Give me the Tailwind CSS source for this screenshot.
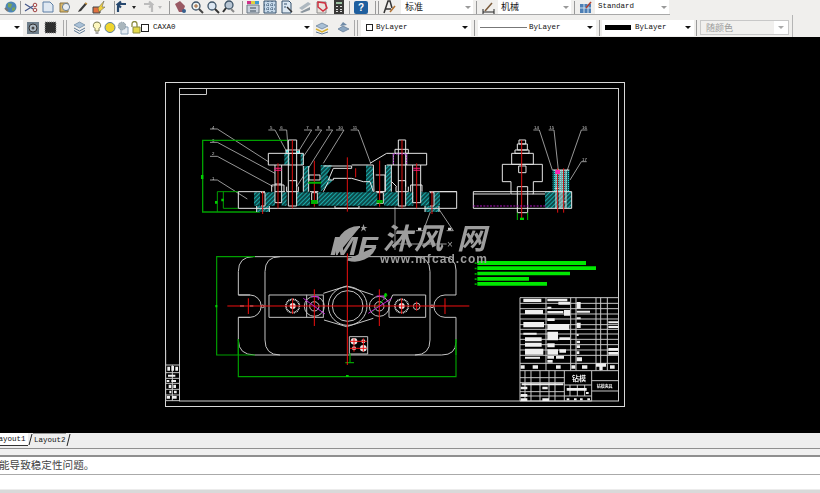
<!DOCTYPE html>
<html lang="en">
<head>
    <meta charset="UTF-8">
    <title>CAXA drawing</title>
    <script src="https://cdn.jsdelivr.net/npm/@tailwindcss/browser@4"></script>
</head>
<body class="w-[820px] h-[493px] overflow-hidden bg-[#f1f0ee] font-['Liberation_Mono',monospace] text-[7.5px] text-[#111]">

    <!-- toolbars -->
    <div class="h-[37px] flex flex-col bg-[#f0efed]">
        <div class="h-[15px] flex items-center w-[670px] border-b border-[#a9a9a9] shrink-0">
            <svg class="ml-[3px] w-[15px] h-[14px]" viewBox="0 0 15 14"><circle cx="8" cy="7" r="5.5" fill="#4d86b5"/><path d="M5 3l4 1-1 4-3-1zM9 8l3-1 0 3-3 1z" fill="#79a35b"/><path d="M2 8l3 3" stroke="#777" stroke-width="2"/></svg>
            <div class="w-[1px] h-[13px] bg-[#999] ml-[2px]"></div>
            <svg class="ml-[3px] w-[14px] h-[13px]" viewBox="0 0 14 13"><path d="M1 3l8 5M1 10l8-5" stroke="#44578a" stroke-width="1.2"/><circle cx="11" cy="4" r="1.8" fill="none" stroke="#a04040"/><circle cx="11" cy="9" r="1.8" fill="none" stroke="#a04040"/></svg>
            <svg class="ml-[3px] w-[14px] h-[14px]" viewBox="0 0 14 14"><path d="M2 2h7l3 3v7H2z" fill="#dfe8f2" stroke="#5c7fa6"/></svg>
            <svg class="ml-[3px] w-[14px] h-[14px]" viewBox="0 0 14 14"><path d="M2 3h8v9H2z" fill="#d9b768" stroke="#8a7340"/><circle cx="8" cy="7" r="3.6" fill="#e9eef3" stroke="#6a7f96"/></svg>
            <svg class="ml-[4px] w-[13px] h-[13px]" viewBox="0 0 13 13"><path d="M2 11l3-1 6-7-2-1-6 7z" fill="#3a3a3a"/><path d="M9 2l2 1" stroke="#c09040" stroke-width="1.5"/></svg>
            <svg class="ml-[3px] w-[14px] h-[14px]" viewBox="0 0 14 14"><path d="M1 7h7v6H1z" fill="#e07040" stroke="#444"/><path d="M6 8l6-7-2 6h3l-6 5z" fill="#f0d040" stroke="#555" stroke-width=".5"/></svg>
            <div class="w-[1px] h-[13px] bg-[#999] ml-[8px]"></div>
            <svg class="w-[14px] h-[14px]" viewBox="0 0 14 14"><path d="M3 11V6q0-3 3-3h5M6 0.500L2.500 3.500 6 6.500" transform="translate(0 1)" fill="none" stroke="#27486e" stroke-width="2.200"/></svg>
            <span class="ml-[3px] border-x-[2px] border-t-[3px] border-x-transparent border-t-[#222]"></span>
            <svg class="ml-[5px] w-[14px] h-[14px]" viewBox="0 0 14 14"><path d="M11 11V6q0-3-3-3H3M8 0.500l3.500 3L8 6.500" transform="translate(0 1)" fill="none" stroke="#bcbcbc" stroke-width="2.200"/></svg>
            <span class="ml-[3px] border-x-[2px] border-t-[3px] border-x-transparent border-t-[#bbb]"></span>
            <div class="w-[1px] h-[13px] bg-[#999] ml-[7px]"></div>
            <svg class="ml-[3px] w-[14px] h-[14px]" viewBox="0 0 14 14"><path d="M2 4l5-3 5 5-2 6H6z" fill="#9a5a64"/><circle cx="11" cy="11" r="2" fill="#36608e"/></svg>
            <svg class="ml-[3px] w-[14px] h-[14px]" viewBox="0 0 14 14"><circle cx="6" cy="6" r="4" fill="#eef2ee" stroke="#40566a" stroke-width="1.300"/><path d="M9 9l4 4" stroke="#444" stroke-width="2"/><path d="M4 6h4M6 4v4" stroke="#a06030"/></svg>
            <svg class="ml-[2px] w-[14px] h-[14px]" viewBox="0 0 14 14"><circle cx="6" cy="6" r="4" fill="#dce7f2" stroke="#40566a" stroke-width="1.300"/><path d="M9 9l4 4" stroke="#333" stroke-width="2"/></svg>
            <svg class="ml-[2px] w-[14px] h-[14px]" viewBox="0 0 14 14"><circle cx="7" cy="5" r="4" fill="#b8c6d4" stroke="#40566a" stroke-width="1.300"/><path d="M4 8l-3 4" stroke="#333" stroke-width="2"/><path d="M9 9l3 3" stroke="#888" stroke-width="2"/></svg>
            <div class="w-[1px] h-[13px] bg-[#999] ml-[6px]"></div>
            <svg class="ml-[3px] w-[14px] h-[14px]" viewBox="0 0 14 14"><path d="M1 1h4v3H1z" fill="#d0308a"/><path d="M5 1h4v3H5z" fill="#e0d040"/><path d="M9 1h4v3H9z" fill="#3c9ad0"/><path d="M1 5h12v8H1z" fill="#c9d2dc" stroke="#6a7682"/><path d="M4 8h6M4 11h6" stroke="#3a4a5a"/></svg>
            <svg class="ml-[3px] w-[14px] h-[14px]" viewBox="0 0 14 14"><path d="M1 1h12v12H1z" fill="#c6d9ea" stroke="#34506c"/><path d="M5 1v12M9 1v12M1 5h12M1 9h12" stroke="#34506c" stroke-dasharray="1 1"/></svg>
            <svg class="ml-[3px] w-[14px] h-[14px]" viewBox="0 0 14 14"><path d="M2 1h7l2 2v10H2z" fill="#dce8f2" stroke="#34506c"/><path d="M7 7l5 5" stroke="#333" stroke-width="1.500"/><path d="M4 4h3M4 7h2" stroke="#34506c"/></svg>
            <svg class="ml-[4px] w-[14px] h-[14px]" viewBox="0 0 14 14"><path d="M1 8l9-6 3 2-9 6z" fill="#aeb8c0"/><path d="M2 12l10-5v3l-8 3z" fill="#8a959e"/></svg>
            <svg class="ml-[3px] w-[14px] h-[14px]" viewBox="0 0 14 14"><path d="M2 2h9v11H2z" fill="#e9e4de" stroke="#8c8c8c"/><path d="M3 2l7 1 2 5-4 3-5-4z" fill="none" stroke="#d03040" stroke-width="1.500"/></svg>
            <svg class="ml-[3px] w-[14px] h-[14px]" viewBox="0 0 14 14"><path d="M2 0h10v14H2z" fill="#3a3a38"/><path d="M4 2h6v2H4z" fill="#9ac0a0"/><path d="M4 6h2v1H4zM8 6h2v1H8zM4 9h2v1H4zM8 9h2v1H8zM4 11h2v1H4zM8 11h2v1H8z" fill="#ddd"/></svg>
            <div class="w-[1px] h-[13px] bg-[#999] ml-[3px]"></div>
            <div class="ml-[4px] w-[14px] h-[13px] bg-[#1f5f9e] rounded-[2px] text-white font-bold text-[10px] leading-[13px] text-center font-['Liberation_Sans',sans-serif]">?</div>
            <div class="w-[1px] h-[13px] bg-[#999] ml-[7px]"></div>
            <div class="w-[1px] h-[13px] bg-[#999] ml-[2px]"></div>
            <svg class="ml-[4px] w-[13px] h-[14px]" viewBox="0 0 13 14"><path d="M1 13L5 1h2l2 7M3 9h5" fill="none" stroke="#333" stroke-width="1.500"/><path d="M7 12l5-6" stroke="#b07030" stroke-width="1.500"/></svg>
            <div class="ml-[5px] w-[72px] h-[14px] bg-white flex items-center justify-between pl-[4px] pr-[2px] font-['Noto_Sans_CJK_SC',sans-serif] text-[9px]">标准<span class="border-x-[3px] border-t-[3px] border-x-transparent border-t-[#999]"></span></div>
            <div class="w-[1px] h-[13px] bg-[#999] ml-[3px]"></div>
            <svg class="ml-[5px] w-[13px] h-[13px]" viewBox="0 0 13 13"><path d="M1 11h11M1 8v5M12 8v5" stroke="#222"/><path d="M3 10l7-8" stroke="#7a5a3a" stroke-width="1.500"/></svg>
            <div class="ml-[3px] w-[73px] h-[14px] bg-white flex items-center justify-between pl-[3px] pr-[2px] font-['Noto_Sans_CJK_SC',sans-serif] text-[9px]">机械<span class="border-x-[3px] border-t-[3px] border-x-transparent border-t-[#999]"></span></div>
            <div class="w-[1px] h-[13px] bg-[#999] ml-[3px]"></div>
            <svg class="ml-[4px] w-[13px] h-[13px]" viewBox="0 0 13 13"><path d="M1 3h11v9H1z" fill="#4d7fb5"/><path d="M1 7h11M5 3v9M9 3v9" stroke="#cfe0ee"/><path d="M7 7l5-6" stroke="#b04030" stroke-width="1.500"/></svg>
            <div class="ml-[3px] w-[74px] h-[14px] bg-white flex items-center justify-between pl-[3px] pr-[2px]">Standard<span class="border-x-[3px] border-t-[3px] border-x-transparent border-t-[#999]"></span></div>
        </div>

        <div class="h-[22px] pt-[3px] w-[793px] flex items-center border-r border-[#b5b5b5] shrink-0">
            <div class="w-[23px] h-[16px] bg-white flex items-center justify-end pr-[3px]"><span class="border-x-[3px] border-t-[3px] border-x-transparent border-t-[#111]"></span></div>
            <svg class="ml-[3px] w-[14px] h-[14px]" viewBox="0 0 14 14"><path d="M1 1h12v12H1z" fill="#6f7f8c"/><circle cx="7" cy="7" r="4" fill="#aebac4" stroke="#333"/><circle cx="7" cy="7" r="1.500" fill="#444"/></svg>
            <svg class="ml-[4px] w-[13px] h-[13px]" viewBox="0 0 13 13"><path d="M1 1h11v11H1z" fill="#2e2e2e" stroke="#999" stroke-dasharray="1 1"/></svg>
            <div class="w-[1px] h-[16px] bg-[#aaa] ml-[6px]"></div>
            <div class="w-[1px] h-[16px] bg-[#aaa] ml-[2px]"></div>
            <svg class="ml-[6px] w-[13px] h-[13px]" viewBox="0 0 13 13"><path d="M1 4l5.500-3L12 4 6.500 7z" fill="#a9c0d6" stroke="#5d7894" stroke-width=".6"/><path d="M1 7l5.500 3L12 7M1 9.500l5.500 3 5.500-3" fill="none" stroke="#5d7894"/></svg>
            <div class="ml-[4px] w-[223px] h-[16px] bg-white flex items-center">
                <svg class="ml-[2px] w-[10px] h-[14px]" viewBox="0 0 10 14"><path d="M5 1a3.500 3.500 0 0 1 2 6.500V10H3V7.500A3.500 3.500 0 0 1 5 1z" fill="#fdf7c0" stroke="#7a7a50"/><path d="M3.500 12h3" stroke="#555"/></svg>
                <svg class="ml-[2px] w-[12px] h-[13px]" viewBox="0 0 12 13"><circle cx="6" cy="6.500" r="5" fill="#efd52e" stroke="#5a7e9e"/></svg>
                <svg class="w-[13px] h-[14px]" viewBox="0 0 13 14"><path d="M5 6h7v7H5z" fill="#e6edf3" stroke="#8aa2b8"/><circle cx="6" cy="5" r="3.800" fill="#a9b6bd" stroke="#8b9ba8" stroke-dasharray="1.500 .8"/></svg>
                <svg class="ml-[1px] w-[11px] h-[13px]" viewBox="0 0 11 13"><path d="M2 6V3a2.500 2.500 0 0 1 5 0v3" fill="none" stroke="#8a8a40" stroke-width="1.300"/><path d="M3 6h7v6H3z" fill="#e3d94a" stroke="#8a8a40"/></svg>
                <div class="w-[8px] h-[8px] bg-white border border-[#222]"></div>
                <span class="ml-[4px] pt-[1px]">CAXA0</span>
                <span class="ml-auto mr-[3px] border-x-[3px] border-t-[3px] border-x-transparent border-t-[#111]"></span>
            </div>
            <svg class="ml-[2px] w-[14px] h-[14px]" viewBox="0 0 14 14"><path d="M1 5l6-3 6 3-6 3z" fill="#a9c0d6" stroke="#4d6a88" stroke-width=".6"/><path d="M1 8l6 3 6-3" fill="none" stroke="#d8b02e" stroke-width="1.500"/><path d="M1 11l6 2 6-2" fill="none" stroke="#5d7894"/></svg>
            <svg class="ml-[8px] w-[13px] h-[13px]" viewBox="0 0 13 13"><path d="M1 8l5-3 6 3-6 3z" fill="#8ca6c0" stroke="#4d6a88" stroke-width=".6"/><path d="M3 5l3-4 4 3" fill="#6f8aa6"/></svg>
            <div class="w-[1px] h-[16px] bg-[#aaa] ml-[4px]"></div>
            <div class="w-[1px] h-[16px] bg-[#aaa] ml-[2px]"></div>
            <div class="ml-[3px] w-[110px] h-[16px] bg-white flex items-center pl-[5px]">
                <div class="w-[7px] h-[7px] bg-white border border-[#222]"></div>
                <span class="ml-[3px] pt-[1px]">ByLayer</span>
                <span class="ml-auto mr-[3px] border-x-[3px] border-t-[3px] border-x-transparent border-t-[#111]"></span>
            </div>
            <div class="w-[1px] h-[16px] bg-[#999] ml-[3px]"></div>
            <div class="ml-[3px] w-[118px] h-[16px] bg-white flex items-center pl-[2px]">
                <div class="w-[47px] h-[1px] bg-[#777]"></div>
                <span class="ml-[2px] pt-[1px]">ByLayer</span>
                <span class="ml-auto mr-[3px] border-x-[3px] border-t-[3px] border-x-transparent border-t-[#111]"></span>
            </div>
            <div class="w-[1px] h-[16px] bg-[#999] ml-[3px]"></div>
            <div class="ml-[2px] w-[92px] h-[16px] bg-white flex items-center pl-[3px]">
                <div class="w-[26px] h-[5px] bg-black"></div>
                <span class="ml-[4px] pt-[1px]">ByLayer</span>
                <span class="ml-auto mr-[3px] border-x-[3px] border-t-[3px] border-x-transparent border-t-[#111]"></span>
            </div>
            <div class="w-[1px] h-[16px] bg-[#999] ml-[2px]"></div>
            <div class="ml-[3px] w-[89px] h-[15px] bg-[#f1f0ee] border border-[#c8c8c8] flex items-center pl-[5px] font-['Noto_Sans_CJK_SC',sans-serif] text-[9px] text-[#9b9b9b]">
                随颜色
                <div class="ml-auto w-[14px] h-full bg-white flex items-center justify-center"><span class="border-x-[3px] border-t-[3px] border-x-transparent border-t-[#aaa]"></span></div>
            </div>
        </div>
    </div>

    <!-- drawing area -->
    <div class="relative h-[396px] bg-black overflow-hidden">
        <svg class="block w-[820px] h-[396px] blur-[0.3px]" viewBox="0 37 820 396" fill="none">
            <defs>
                <pattern id="hatch" width="9" height="9" patternUnits="userSpaceOnUse" patternTransform="rotate(45)">
                    <rect width="9" height="9" fill="#0c4a4a"/>
                    <path d="M0 0V9" stroke="#1fd8d8" stroke-width="4"/>
                </pattern>
                <pattern id="dots" width="6" height="6" patternUnits="userSpaceOnUse">
                    <rect width="6" height="6" fill="#0c5a5a"/>
                    <rect width="3" height="3" fill="#22e0e0"/>
                </pattern>
            </defs>

            <!-- sheet frame -->
            <rect x="165.500" y="82.500" width="459" height="324" stroke="#d8d8d8"/>
            <rect x="179.500" y="88.500" width="439" height="312.500" stroke="#d0d0d0"/>
            <path d="M179.500 94.500H206.500V88.500" stroke="#c8c8c8"/>

            <!-- front view, coordinates taken from a 3x crop -->
            <g transform="translate(160 80) scale(.33333)" stroke-width="3">
                <g stroke="#b5b5b5" stroke-width="2.500">
                    <path d="M150 147H172L325 245M150 187H172L345 280M150 229H172L340 320M150 300H172L262 357"/>
                    <path d="M325 150H345L380 215M357 150H380L385 215M432 150H455L415 215M465 150H485L430 230M498 150H518L410 320M528 150H552L490 250M572 150H595L632 250"/>
                    <path d="M768 452H790L815 385M860 452H880L835 385M705 380V510M705 492H860"/>
                </g>
                <g fill="#d0d0d0" font-size="13" font-family="Liberation Sans" stroke="none">
                    <text x="156" y="146">4</text><text x="156" y="186">3</text><text x="156" y="226">2</text><text x="156" y="299">1</text>
                    <text x="330" y="148">5</text><text x="361" y="148">6</text><text x="439" y="148">7</text><text x="471" y="148">8</text><text x="503" y="148">9</text><text x="534" y="148">10</text><text x="578" y="148">11</text>
                </g>
                <path d="M774 443h10v8h-10zM864 443h10v8h-10z" fill="#d0d0d0"/>
                <g stroke="#00a000" stroke-width="4">
                    <path d="M382 181H128V396H300"/>
                    <path d="M235 335H172V396" stroke-width="3"/>
                    <path d="M235 385H190V335" stroke-width="3"/>
                </g>
                <path d="M123 285h7v12h-7zM165 363h7v8h-7zM184 356h7v8h-7z" fill="#00d000"/>

                <!-- hatched sections -->
                <g fill="url(#hatch)">
                    <path d="M282 337h18v40h-18zM315 337h30v40h-30zM365 337h15v40h-15zM408 337h42v40h-42zM475 337h177v40H475zM672 337h43v40h-43zM738 337h22v40h-22zM782 337h26v40h-26zM822 337h18v40h-18z"/>
                    <path d="M430 258h16v77h-16zM482 255h35l-16 30 16 18-35 32zM618 255l22 6v74h-22zM676 255h18v80h-18z"/>
                    <path d="M373 220h16v35h-16zM422 220h8v35h-8zM290 378h38v18h-38zM795 378h42v18h-42z"/>
                </g>
                <path d="M408 213h12v8h-12zM378 210h8v8h-8z" fill="#22e0e0"/>

                <g stroke="#e6e6e6">
                    <path d="M235 335H315M235 335V385H890V335H840M235 385M375 335H345M450 335H475M652 335H672M808 335H890"/>
                    <path d="M325 220H430V255H325ZM630 250L680 220H800V255H680M700 255V220M740 255V220"/>
                    <path d="M345 255V368H365V255M345 312H365M335 335V315H372V335"/>
                    <path d="M758 255V368H782V255M752 335V315H786V335"/>
                    <path d="M385 180V378H410V180ZM378 210H418V220H378ZM380 320V335H415V320M388 302H410V320"/>
                    <path d="M715 180V378H737V180ZM705 208H745V220H705ZM708 320V335H745V320M715 302H737V320"/>
                    <path d="M430 258V335M446 258V335M490 258H575V265H520L505 300H520V295H575L610 305H630L640 335M490 335L505 305M575 255H640L642 335"/>
                    <path d="M676 255V335M694 255V335M695 305L710 320"/>
                    <path d="M447 285H480V300H447ZM647 285H675V335H647"/>
                    <path d="M455 338H472V370H455ZM650 338H670V370H650M303 338H315V378H303M810 338H822V378H810"/>
                    <path d="M525 378V385H597V378M528 385H595M290 378V396M328 378V396M795 378V396M837 378V396"/>
                </g>
                <g stroke="#e01010">
                    <path d="M562 232V395M587 265V292M397 180V385M726 180V385M354 250V385M770 250V385M463 242V380M659 242V380M308 335V402M816 335V402"/>
                </g>
                <path d="M343 263h22v3h-22zM343 269h22v3h-22zM760 263h20v3h-20zM760 269h20v3h-20z" fill="#ff2080"/>
                <path d="M700 222v30M740 222v30M700 222h40" stroke="#a020c0" stroke-dasharray="5 3"/>
                <path d="M445 305h38v6h-38zM453 360h20v12h-20zM650 360h18v10h-18z" fill="#00b000"/>
            </g>

            <!-- side view -->
            <g transform="translate(460 120) scale(.33333)" stroke-width="3">
                <g stroke="#b5b5b5" stroke-width="2.500">
                    <path d="M220 30H238L277 150M266 30H282L295 150M382 30H364L322 150M380 125H364L330 180"/>
                </g>
                <g fill="#d0d0d0" font-size="13" font-family="Liberation Sans"><text x="222" y="27">14</text><text x="268" y="27">15</text><text x="366" y="27">16</text><text x="366" y="122">17</text></g>
                <path d="M278 150h50v65h-50z" fill="url(#dots)"/>
                <path d="M255 215h80v50h-80z" fill="url(#hatch)"/>
                <g stroke="#e6e6e6">
                    <path d="M40 215V265H335V215H40M40 222H152M218 222H255"/>
                    <path d="M127 133H247V185H220V222H153V185H127Z"/>
                    <path d="M155 100H220V133H155ZM165 90H207V100H165ZM172 72H202V90H172ZM177 60H197V72H177Z"/>
                    <path d="M172 200H203V278H172ZM176 138H198V158H176Z"/>
                    <path d="M288 150V265M300 150V265M306 150V265M318 150V265M278 150H328M286 205H298M308 245H318"/>
                </g>
                <path d="M185 60V295M293 145V278M311 145V278" stroke="#e01010"/>
                <path d="M40 258H260" stroke="#b010c0" stroke-dasharray="6 4"/>
                <path d="M286 150h14v12h-14z" fill="#ff20b0"/>
                <path d="M172 278V300M203 278V300" stroke="#00c000"/>
                <path d="M180 293h12v7h-12z" fill="#00d000"/>
            </g>

            <!-- top view -->
            <g transform="translate(200 240) scale(.33333)" stroke-width="3">
                <g stroke="#c4c4c4">
                    <path d="M165 50H725Q768 50 768 90V165H735A33 33 0 0 0 735 232H768V305Q768 345 725 345H165Q115 345 115 300V232H150A33 33 0 0 0 150 165H115V95Q115 50 160 50"/>
                    <path d="M240 50Q195 50 195 95V300Q195 345 240 345M645 50Q690 50 690 95V300Q690 345 645 345"/>
                    <path d="M115 165H150M115 232H150M120 198H132M150 198H160"/>
                    <path d="M320 165H207V232H320M567 232V190L578 165H677V232H567"/>
                    <path d="M370 160L440 138L520 165M372 240L440 260L520 235"/>
                    <rect x="320" y="165" width="50" height="67"/>
                    <circle cx="443" cy="198" r="46"/><circle cx="443" cy="198" r="58"/>
                    <circle cx="343" cy="199" r="14"/><circle cx="343" cy="199" r="30"/>
                    <circle cx="538" cy="199" r="14"/><circle cx="538" cy="199" r="30"/>
                    <circle cx="650" cy="199" r="10"/><circle cx="188" cy="199" r="4"/><circle cx="696" cy="199" r="4"/>
                    <path d="M448 290H503V342H448Z"/>
                </g>
                <g fill="#e8e8e8">
                    <circle cx="278" cy="198" r="20" fill="none" stroke="#f0f0f0" stroke-width="5" stroke-dasharray="3 2"/>
                    <circle cx="605" cy="198" r="20" fill="none" stroke="#f0f0f0" stroke-width="5" stroke-dasharray="3 2"/>
                    <circle cx="278" cy="198" r="9"/><circle cx="605" cy="198" r="9"/>
                    <circle cx="462" cy="304" r="10"/><circle cx="490" cy="325" r="10"/><circle cx="490" cy="304" r="6"/><circle cx="462" cy="325" r="6"/>
                </g>
                <g stroke="#00a000" stroke-width="3.500">
                    <path d="M165 50H50V345H165M115 298V410H768V298"/>
                    <path d="M115 298V345M768 298V345"/>
                    <path d="M450 340V370M436 368H462"/>
                </g>
                <path d="M46 195h6v7h-6zM438 405h8v6h-8zM555 158l7 4-6 12-6-4z" fill="#00d000"/>
                <path d="M518 215L562 165" stroke="#00b000"/>
                <g stroke="#f01010">
                    <path d="M82 198H808M442 40V375M145 175V222M278 175V222M343 148V258M538 148V258M605 175V222M650 185V212M735 175V222"/>
                    <path d="M450 304H500M450 325H500M462 295V335M490 295V335"/>
                </g>
                <g stroke="#c020d0"><path d="M310 175L375 222M505 220L575 175M335 170H355V180M530 168H552V180"/></g>
            </g>

            <!-- green text block and title block -->
            <g transform="translate(470 250) scale(.33333)">
                <path d="M22 33H348V45H22ZM22 49H378V60H22ZM22 65H300V76H22ZM22 81H177V92H22ZM22 96H231V107H22Z" fill="#00e800"/>
                <path d="M14 37h6v5h-6zM14 53h6v5h-6zM14 69h6v5h-6zM14 85h6v5h-6zM14 100h6v5h-6z" fill="#00a000"/>

                <g stroke="#c8c8c8" stroke-width="3">
                    <path d="M150 143H445M150 160H445M150 176H445M150 192H445M150 207H445M150 224H445M150 238H445M150 252H445M150 268H445M150 284H445M150 300H445M150 316H445M150 340H445M150 362H445M150 453H365M283 405H365M283 438H365M365 392H445M365 423H445"/>
                    <path d="M150 143V453M228 143V362M302 143V362M318 143V362M378 143V362M392 143V362M412 143V362M283 362V453M365 362V453M165 362V453M183 362V453M210 362V453M237 362V453M255 362V453M300 405V438M322 405V438M344 405V438"/>
                    <path d="M150 383H283M150 398H283M150 425H283M150 438H283"/>
                </g>
                <path d="M160 146h54v10h-54zM232 146h60v8h-60zM265 155h35v9h-35zM165 180h54v12h-54zM232 170h12v6h-12zM232 183h48v7h-48zM282 180h18v17h-18zM320 156h12v20h-12zM320 182h40v6h-40zM160 216h62v16h-62zM232 205h22v8h-22zM232 222h66v18h-66zM320 202h12v6h-12zM320 218h12v16h-12zM415 214h30v6h-30zM415 228h30v6h-30zM160 248h40v6h-40zM165 262h50v12h-50zM232 245h32v26h-32zM268 262h32v8h-32zM320 252h6v6h-6zM165 278h50v12h-50zM232 280h22v12h-22zM165 296h55v18h-55zM232 298h32v16h-32zM268 298h20v10h-20zM320 272h10v8h-10zM320 286h10v8h-10zM320 304h8v8h-8zM415 294h30v8h-30zM415 306h30v8h-30zM165 320h45v6h-45zM232 318h20v8h-20zM258 318h24v8h-24zM320 322h16v12h-16zM232 330h16v8h-16zM152 346h12v10h-12zM188 346h16v10h-16zM258 346h14v10h-14zM304 346h12v10h-12zM336 346h16v10h-16zM378 340h30v10h-30zM388 350h10v10h-10zM420 346h14v10h-14zM152 410h20v8h-20zM152 432h20v8h-20zM152 445h20v8h-20zM217 410h16v8h-16zM217 445h20v8h-20zM155 400h125v6h-125zM290 414h60v8h-60zM348 426h8v6h-8zM290 445h8v6h-8zM312 445h8v6h-8zM330 445h8v6h-8zM352 445h8v6h-8z" fill="#efefef"/>
                <text x="306" y="392" fill="#f4f4f4" font-size="21" font-weight="700" font-family="Noto Sans CJK SC">钻模</text>
                <text x="380" y="415" fill="#f4f4f4" font-size="12" font-weight="700" font-family="Noto Sans CJK SC">钻模夹具</text>
            </g>

            <!-- left title strip -->
            <g transform="translate(160 350) scale(.33333)">
                <g stroke="#c8c8c8" stroke-width="3"><path d="M17 45H58M17 68H58M17 85H58M17 100H58M17 118H58M17 135H58M17 152H58M37 45V152M17 0V152"/></g>
                <path d="M22 50h8v12h-8zM34 48h8v14h-8zM46 50h8v12h-8zM24 74h22v6h-22zM20 90h8v6h-8zM34 90h14v6h-14zM26 104h8v10h-8zM40 104h8v10h-8zM28 122h6v8h-6zM42 122h8v8h-8zM20 138h10v8h-10zM36 138h14v8h-14z" fill="#efefef"/>
            </g>

            <!-- watermark -->
            <g fill="#9d9d9d">
                <path d="M337 255A23 23 0 0 1 360 227" stroke="#9d9d9d" stroke-width="2"/>
                <path d="M375 247A22 22 0 0 1 348 259" stroke="#9d9d9d" stroke-width="3"/>
                <text x="330" y="255" font-size="26" font-weight="700" font-style="italic" font-family="Liberation Sans" textLength="48" lengthAdjust="spacingAndGlyphs">MF</text>
                <path d="M361 227h1.500l1-3 1 3h3l-2.500 1.500 1 3-2.500-2-2.500 2 1-3z"/>
                <text x="383" y="249" font-size="29" font-weight="700" letter-spacing="2" font-style="italic" font-family="Noto Sans CJK SC">沐风</text>
                <text x="447" y="248" font-size="10" font-family="Liberation Sans">×</text>
                <text x="457" y="249" font-size="29" font-weight="700" font-style="italic" font-family="Noto Sans CJK SC">网</text>
                <text x="380" y="263" font-size="12" font-weight="700" textLength="107" font-family="Liberation Sans">www.mfcad.com</text>
            </g>
        </svg>
    </div>

    <!-- layout tabs -->
    <div class="h-[16px] bg-[#eeeeee] border-b border-[#8f8f8f] overflow-hidden flex items-start">
        <div class="-ml-[9px] h-[13px] pl-[3px] pt-[1px] bg-white border-b border-[#333] leading-[10px] w-[37px] shrink-0">Layout1</div>
        <svg class="w-[5px] h-[13px] shrink-0" viewBox="0 0 5 13"><path d="M1 12L4 1" stroke="#222"/></svg>
        <div class="h-[12px] w-[33px] pl-[1px] pt-[1px] leading-[10px] shrink-0 border-t border-[#999]">Layout2</div>
        <svg class="w-[6px] h-[13px] shrink-0" viewBox="0 0 6 13"><path d="M1 13L4 1" stroke="#222"/></svg>
    </div>

    <!-- command line -->
    <div class="h-[8px] bg-[#f0f0f0] border-b-[2px] border-[#8f8f8f]"></div>
    <div class="h-[18px] bg-white border-b border-[#aaa] overflow-hidden whitespace-nowrap font-['Noto_Sans_CJK_SC',sans-serif] text-[10.600px] leading-[15px] text-[#444]"><span class="-ml-[1px] inline-block">能导致稳定性问题。</span></div>
    <div class="h-[14px] bg-white"></div>
    <div class="h-[4px] bg-[#d9d9d9] border-t border-[#ececec]"></div>
</body>
</html>
